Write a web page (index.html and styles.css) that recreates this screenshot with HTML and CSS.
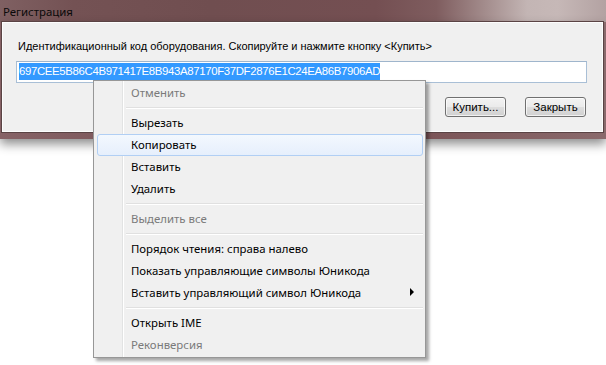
FILE: index.html
```html
<!DOCTYPE html>
<html lang="ru">
<head>
<meta charset="utf-8">
<title>Регистрация</title>
<link rel="stylesheet" href="styles.css">
</head>
<body>
<div class="window">
  <div class="titlebar"><span class="title">Регистрация</span></div>
  <div class="frame">
    <div class="client">
      <div class="prompt">Идентификационный код оборудования. Скопируйте и нажмите кнопку &lt;Купить&gt;</div>
      <div class="field"><span class="sel">697CEE5B86C4B971417E8B943A87170F37DF2876E1C24EA86B7906AD</span></div>
      <div class="actions">
        <button class="btn">Купить...</button>
        <button class="btn">Закрыть</button>
      </div>
    </div>
  </div>
</div>

<div class="menu">
  <div class="item disabled">Отменить</div>
  <div class="sep"></div>
  <div class="item">Вырезать</div>
  <div class="item hover">Копировать</div>
  <div class="item">Вставить</div>
  <div class="item">Удалить</div>
  <div class="sep"></div>
  <div class="item disabled">Выделить все</div>
  <div class="sep"></div>
  <div class="item">Порядок чтения: справа налево</div>
  <div class="item">Показать управляющие символы Юникода</div>
  <div class="item">Вставить управляющий символ Юникода<span class="arrow"></span></div>
  <div class="sep"></div>
  <div class="item">Открыть IME</div>
  <div class="item disabled">Реконверсия</div>
</div>
</body>
</html>
```

FILE: styles.css
```css
html, body {
  margin: 0;
  padding: 0;
}
body {
  width: 606px;
  height: 365px;
  overflow: hidden;
  background: #ffffff;
  position: relative;
  font-family: "Noto Sans", "Liberation Sans", sans-serif;
}

.window {
  width: 606px;
}

.titlebar {
  height: 22px;
  display: flex;
  align-items: center;
  padding-left: 3px;
  background: linear-gradient(90deg, #7f6062 0%, #745254 12%, #704e50 35%, #744f52 62%, #7f5d5f 72%, #a38c8c 80%, #c3b5b4 87%, #c6b8b7 92%, #b3a2a2 100%);
}
.title {
  font-size: 11.4px;
  color: #0a0a0a;
}

.frame {
  background: linear-gradient(90deg, #866266 0%, #7a5457 30%, #7b5457 70%, #8a6a6c 100%);
  padding: 0 3px 7px 2px;
  box-shadow: 0 5px 10px rgba(0, 0, 0, 0.45);
}

.client {
  box-sizing: border-box;
  height: 110px;
  background: #f0f0f0;
  border: 1px solid #fdfdfd;
  outline: 1px solid #5a4344;
  padding: 16px 15px 0 13px;
  font-family: "Liberation Sans", Arial, sans-serif;
  font-size: 11px;
  color: #000;
}

.prompt {
  padding-left: 2px;
  line-height: 15px;
}

.field {
  margin-top: 7px;
  height: 22px;
  box-sizing: border-box;
  background: #ffffff;
  border: 1px solid #a9bfd6;
  border-top-color: #9fb5cc;
  padding: 1px 2px 0;
  font-family: "Liberation Sans", Arial, sans-serif;
  font-size: 11.4px;
  line-height: 17px;
}
.sel {
  display: inline-block;
  background: #3399ff;
  color: #ffffff;
  letter-spacing: -0.35px;
}

.actions {
  display: flex;
  justify-content: flex-end;
  gap: 19px;
  margin-top: 14px;
  padding-right: 1px;
}
.btn {
  width: 61px;
  height: 20px;
  padding: 0;
  border: 1px solid #707070;
  border-radius: 3px;
  background: linear-gradient(#f3f3f3 0%, #ebebeb 48%, #dddddd 52%, #d0d0d0 100%);
  box-shadow: inset 0 0 0 1px rgba(255, 255, 255, 0.7);
  font-family: "Liberation Sans", Arial, sans-serif;
  font-size: 11.5px;
  color: #000;
}

.menu {
  position: absolute;
  left: 93px;
  top: 80px;
  width: 327px;
  padding: 1px 2px;
  border: 1px solid #979797;
  background:
    linear-gradient(90deg, transparent 28px, #e2e3e3 28px, #e2e3e3 29px, #ffffff 29px, #ffffff 30px, transparent 30px),
    #f0f0f0;
  box-shadow: 3px 3px 3px rgba(0, 0, 0, 0.35);
  font-family: "Noto Sans", "Liberation Sans", sans-serif;
  font-size: 11.4px;
  color: #000;
}

.item {
  box-sizing: border-box;
  height: 22px;
  display: flex;
  align-items: center;
  padding: 0 8px 2px 33px;
  border: 1px solid transparent;
  border-radius: 3px;
  margin-left: 1px;
}
.item.disabled {
  color: #7a7a7a;
}
.item.hover {
  border-color: #b1cff4;
  background: linear-gradient(#f3f8fe, #e6effc);
}

.arrow {
  margin-left: auto;
  width: 0;
  height: 0;
  border-left: 4px solid #000;
  border-top: 4px solid transparent;
  border-bottom: 4px solid transparent;
}

.sep {
  height: 8px;
  margin-left: 30px;
  display: flex;
  flex-direction: column;
  justify-content: center;
}
.sep::before {
  content: "";
  display: block;
  border-top: 1px solid #e0e0e0;
  border-bottom: 1px solid #ffffff;
}
```
